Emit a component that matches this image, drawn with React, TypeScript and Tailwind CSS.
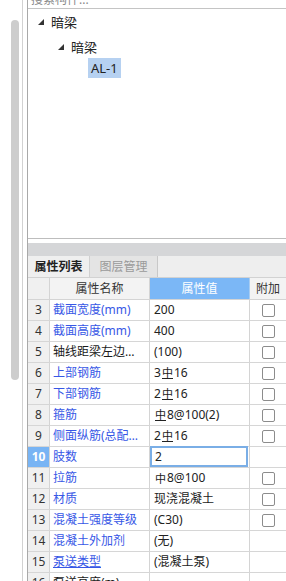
import React from "react";

type Row = {
  n: number;
  name: string;
  value: React.ReactNode;
  color: "blue" | "black";
  check: boolean;
  underline?: boolean;
  active?: boolean;
};

const Hrb = () => (
  <span className="inline-block align-top text-[11px] leading-[10px] mt-[1px] mx-[1px] border-b border-current">中</span>
);
const Hpb = () => (
  <span className="inline-block align-top text-[11px] leading-[11px] mt-[1px] mx-[1px]">中</span>
);

const rows: Row[] = [
  { n: 3, name: "截面宽度(mm)", value: "200", color: "blue", check: true },
  { n: 4, name: "截面高度(mm)", value: "400", color: "blue", check: true },
  { n: 5, name: "轴线距梁左边线距离(mm)", value: "(100)", color: "black", check: true },
  { n: 6, name: "上部钢筋", value: <>3<Hrb />16</>, color: "blue", check: true },
  { n: 7, name: "下部钢筋", value: <>2<Hrb />16</>, color: "blue", check: true },
  { n: 8, name: "箍筋", value: <><Hrb />8@100(2)</>, color: "blue", check: true },
  { n: 9, name: "侧面纵筋(总配筋值)", value: <>2<Hrb />16</>, color: "blue", check: true },
  { n: 10, name: "肢数", value: "2", color: "blue", check: false, active: true },
  { n: 11, name: "拉筋", value: <><Hpb />8@100</>, color: "blue", check: true },
  { n: 12, name: "材质", value: "现浇混凝土", color: "blue", check: true },
  { n: 13, name: "混凝土强度等级", value: "(C30)", color: "blue", check: true },
  { n: 14, name: "混凝土外加剂", value: "(无)", color: "blue", check: false },
  { n: 15, name: "泵送类型", value: "(混凝土泵)", color: "blue", check: false, underline: true },
  { n: 16, name: "泵送高度(m)", value: "", color: "black", check: false },
];

const Tri = () => (
  <svg width="6" height="6" viewBox="0 0 6 6" className="shrink-0">
    <polygon points="6,0 6,6 0,6" fill="#333" />
  </svg>
);

export default function App() {
  return (
    <div
      className="w-[286px] h-[581px] overflow-hidden bg-white flex text-[12px] text-[#222]"
      style={{ fontFamily: '"Noto Sans", "Noto Sans CJK SC", sans-serif' }}
    >
      {/* left scroll strip */}
      <div className="w-[22px] shrink-0 flex flex-col">
        <div className="ml-[11px] mt-[20px] w-[8px] h-[360px] rounded-[4px] bg-[#cdcdcd]" />
      </div>
      <div className="w-px shrink-0 bg-[#d2d2d2]" />
      <div className="w-[4px] shrink-0" />
      {/* main panel */}
      <div className="flex-1 min-w-0 flex flex-col border-l border-[#a9a9a9]">
        {/* search box (cut off) */}
        <div className="h-[9px] shrink-0 overflow-hidden border-b border-[#c4c4c4]">
          <div className="-mt-[9px] pl-[3px] text-[12px] leading-[17px] text-[#8a8a8a]">搜索构件...</div>
        </div>
        {/* tree */}
        <div className="h-[230px] shrink-0 border-b border-[#bdbdbd] flex flex-col text-[13px] leading-[18px]">
          <div className="flex items-center mt-[4px] ml-[10px] h-[18px] gap-[7px]">
            <Tri />
            <span>暗梁</span>
          </div>
          <div className="flex items-center mt-[7px] ml-[30px] h-[18px] gap-[7px]">
            <Tri />
            <span>暗梁</span>
          </div>
          <div className="flex mt-[2px] ml-[60px]">
            <span className="px-[3px] h-[20px] leading-[20px] bg-[#b6d1f1]">AL-1</span>
          </div>
        </div>
        <div className="h-[4px] shrink-0" />
        <div className="h-[13px] shrink-0 bg-[#d5d6d8]" />
        {/* tabs */}
        <div className="h-[22px] shrink-0 flex bg-[#eeeeee] border-b border-[#d2d2d2]">
          <div className="w-[62px] flex items-center justify-center text-[#222] font-semibold bg-[#efefef] border-r border-[#d0d0d0]">
            属性列表
          </div>
          <div className="w-[68px] flex items-center justify-center text-[#9a9a9a] bg-[#e4e4e4] border-r border-[#c8c8c8]">
            图层管理
          </div>
          <div className="flex-1" />
        </div>
        {/* header */}
        <div className="h-[22px] shrink-0 flex border-b border-[#d4d4d4]">
          <div className="w-[22px] shrink-0 bg-[#f0f0f0] border-r border-[#d4d4d4]" />
          <div className="w-[100px] shrink-0 bg-[#f3f3f3] border-r border-[#d4d4d4] flex items-center justify-center text-[#333]">
            属性名称
          </div>
          <div className="w-[100px] shrink-0 bg-[#7bb7f6] border-r border-[#a9cdf2] flex items-center justify-center text-white">
            属性值
          </div>
          <div className="flex-1 bg-[#f3f3f3] flex items-center justify-center text-[#333]">附加</div>
        </div>
        {/* rows */}
        {rows.map((r) => (
          <div key={r.n} className="h-[21px] shrink-0 flex border-b border-[#d6d6d6]">
            <div
              className={
                r.active
                  ? "w-[22px] shrink-0 bg-[#78b4f4] border-r border-[#d4d4d4] flex items-center justify-center text-white font-bold"
                  : "w-[22px] shrink-0 bg-[#f0f0f0] border-r border-[#d4d4d4] flex items-center justify-center text-[#333]"
              }
            >
              {r.n}
            </div>
            <div
              className={
                "w-[100px] shrink-0 border-r border-[#d4d4d4] pl-[3px] pr-[7px] flex items-center min-w-0 " +
                (r.color === "blue" ? "text-[#3757e6]" : "text-[#1a1a1a]")
              }
            >
              <span className={"truncate " + (r.underline ? "underline underline-offset-1" : "")}>{r.name}</span>
            </div>
            <div className="w-[100px] shrink-0 border-r border-[#d4d4d4] flex items-stretch">
              {r.active ? (
                <div className="flex-1 border-2 border-[#7aaee6] -mt-px flex items-center pl-[3px] mr-px">{r.value}</div>
              ) : (
                <div className="flex-1 flex items-center pl-[4px] whitespace-nowrap">{r.value}</div>
              )}
            </div>
            <div className="flex-1 flex items-center justify-center">
              {r.check && <div className="w-[13px] h-[13px] rounded-[2px] border border-[#8c8c8c] bg-white" />}
            </div>
          </div>
        ))}
      </div>
    </div>
  );
}
